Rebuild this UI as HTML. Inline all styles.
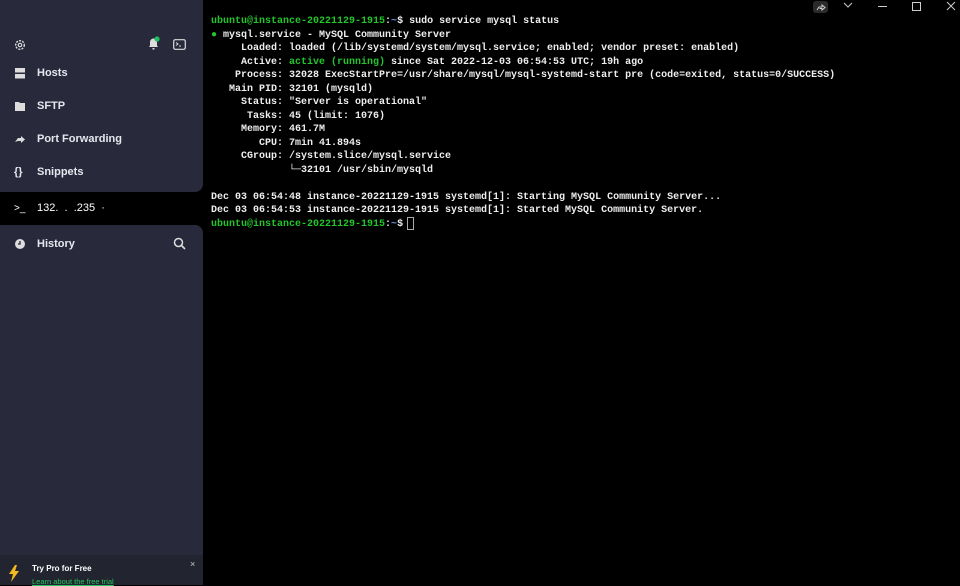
<!DOCTYPE html>
<html><head><style>
body{margin:0;width:960px;height:585px;background:#000;overflow:hidden;position:relative;font-family:"Liberation Sans",sans-serif}
.sb{position:absolute;left:0;width:203px;background:#282a3b}
.top{top:0;height:192px;border-bottom-right-radius:8px}
.bot{top:225px;height:330px;border-top-right-radius:8px}
.ban{position:absolute;left:0;top:555px;width:203px;height:30px;background:#22242f}
.it{position:absolute;left:14px;color:#e6e7ee;font-size:11px;font-weight:bold;display:flex;align-items:center}
.term{position:absolute;left:211px;top:15px;font-family:"Liberation Mono",monospace;font-size:10px;line-height:13.5px;color:#eee;white-space:pre;font-weight:bold}
.term span{line-height:13.5px}
.g{color:#22c52a}.b{color:#6d8dd8}
.ctl{position:absolute;top:0;color:#ccc;font-size:12px}
</style></head><body>
<div class="sb top"></div><div class="sb bot"></div><div class="ban"></div>
<svg style="position:absolute;left:14px;top:39px" width="12" height="12" viewBox="0 0 12 12"><circle cx="6" cy="6" r="4.3" fill="none" stroke="#ddd" stroke-width="1.4" stroke-dasharray="2 1.2"/><circle cx="6" cy="6" r="1.7" fill="none" stroke="#ddd" stroke-width="1.2"/></svg>
<svg style="position:absolute;left:147px;top:36px" width="14" height="15" viewBox="0 0 14 15"><path d="M2 11 L3 9.5 V6 a3.5 3.5 0 0 1 7 0 V9.5 L11 11 Z" fill="#ddd"/><rect x="5.5" y="12" width="2" height="1.5" fill="#ddd"/><circle cx="10" cy="3" r="2.6" fill="#20c060"/></svg>
<svg style="position:absolute;left:173px;top:39px" width="13" height="11" viewBox="0 0 13 11"><rect x="0.7" y="0.7" width="11.6" height="9.6" rx="1.5" fill="none" stroke="#ddd" stroke-width="1.2"/><path d="M3 3.5 L5 5 L3 6.5 M6 7 H8" stroke="#ddd" fill="none"/></svg>
<div class="it" style="top:67px"><svg width="12" height="11" style="margin-right:11px"><rect x="1" y="0" width="10" height="4.5" fill="#ddd"/><rect x="1" y="6" width="10" height="4.5" fill="#ddd"/></svg>Hosts</div>
<div class="it" style="top:100px"><svg width="12" height="11" style="margin-right:11px"><path d="M1 1 H5 L6 2 H11 V10 H1Z" fill="#ddd"/></svg>SFTP</div>
<div class="it" style="top:133px"><svg width="12" height="11" style="margin-right:11px"><path d="M1 8 L4 4 H7 V2 L11 5.5 L7 9 V7 H4 Z" fill="#ddd"/></svg>Port Forwarding</div>
<div class="it" style="top:166px"><span style="width:12px;margin-right:11px;font-size:11px">{}</span>Snippets</div>
<div class="it" style="top:202px;font-weight:normal;color:#fff"><span style="width:12px;margin-right:11px;font-size:10px">&gt;_</span>132. &nbsp;.&nbsp; .235 &nbsp;·</div>
<div class="it" style="top:238px"><svg width="12" height="12" style="margin-right:11px"><circle cx="6" cy="6" r="5" fill="#ddd"/><path d="M6 3 V6 H4" stroke="#282a3b" stroke-width="1.3" fill="none"/></svg>History</div>
<svg style="position:absolute;left:173px;top:237px" width="13" height="13"><circle cx="5.5" cy="5.5" r="4" fill="none" stroke="#ddd" stroke-width="1.5"/><path d="M8.5 8.5 L12 12" stroke="#ddd" stroke-width="1.6"/></svg>
<svg style="position:absolute;left:8px;top:565px" width="12" height="17"><path d="M7 0 L1 9 H5 L3 17 L11 6 H7 L9 0Z" fill="#f3b921"/></svg>
<div style="position:absolute;left:32px;top:564px;color:#fff;font-size:8px;font-weight:bold">Try Pro for Free</div>
<div style="position:absolute;left:32px;top:577px;color:#22c55e;font-size:7.5px;text-decoration:underline">Learn about the free trial</div>
<div style="position:absolute;left:190px;top:559px;color:#ccc;font-size:9px">×</div>
<div style="position:absolute;left:813px;top:1px;width:15px;height:12px;background:#2a2a2a;border-radius:3px"></div>
<svg style="position:absolute;left:815px;top:2px" width="11" height="10"><path d="M2 8 L4 5 H7 V3 L10 5.5 L7 8 V6.5 H4.5" fill="none" stroke="#ccc"/></svg>
<svg style="position:absolute;left:843px;top:2px" width="10" height="6"><path d="M1 1 L5 5 L9 1" fill="none" stroke="#ccc"/></svg>
<div style="position:absolute;left:878px;top:6px;width:9px;height:1px;background:#ccc"></div>
<div style="position:absolute;left:912px;top:2px;width:7px;height:7px;border:1px solid #ccc"></div>
<svg style="position:absolute;left:946px;top:1px" width="10" height="10"><path d="M1 1 L9 9 M9 1 L1 9" stroke="#ccc"/></svg>
<div class="term"><span class="g">ubuntu@instance-20221129-1915</span>:<span class="b">~</span>$ sudo service mysql status
<span class="g">●</span> mysql.service - MySQL Community Server
     Loaded: loaded (/lib/systemd/system/mysql.service; enabled; vendor preset: enabled)
     Active: <span class="g">active (running)</span> since Sat 2022-12-03 06:54:53 UTC; 19h ago
    Process: 32028 ExecStartPre=/usr/share/mysql/mysql-systemd-start pre (code=exited, status=0/SUCCESS)
   Main PID: 32101 (mysqld)
     Status: "Server is operational"
      Tasks: 45 (limit: 1076)
     Memory: 461.7M
        CPU: 7min 41.894s
     CGroup: /system.slice/mysql.service
             └─32101 /usr/sbin/mysqld

Dec 03 06:54:48 instance-20221129-1915 systemd[1]: Starting MySQL Community Server...
Dec 03 06:54:53 instance-20221129-1915 systemd[1]: Started MySQL Community Server.
<span class="g">ubuntu@instance-20221129-1915</span>:<span class="b">~</span>$ </div>
<div style="position:absolute;left:407px;top:217px;width:5px;height:11px;border:1px solid #aaa"></div>
</body></html>
